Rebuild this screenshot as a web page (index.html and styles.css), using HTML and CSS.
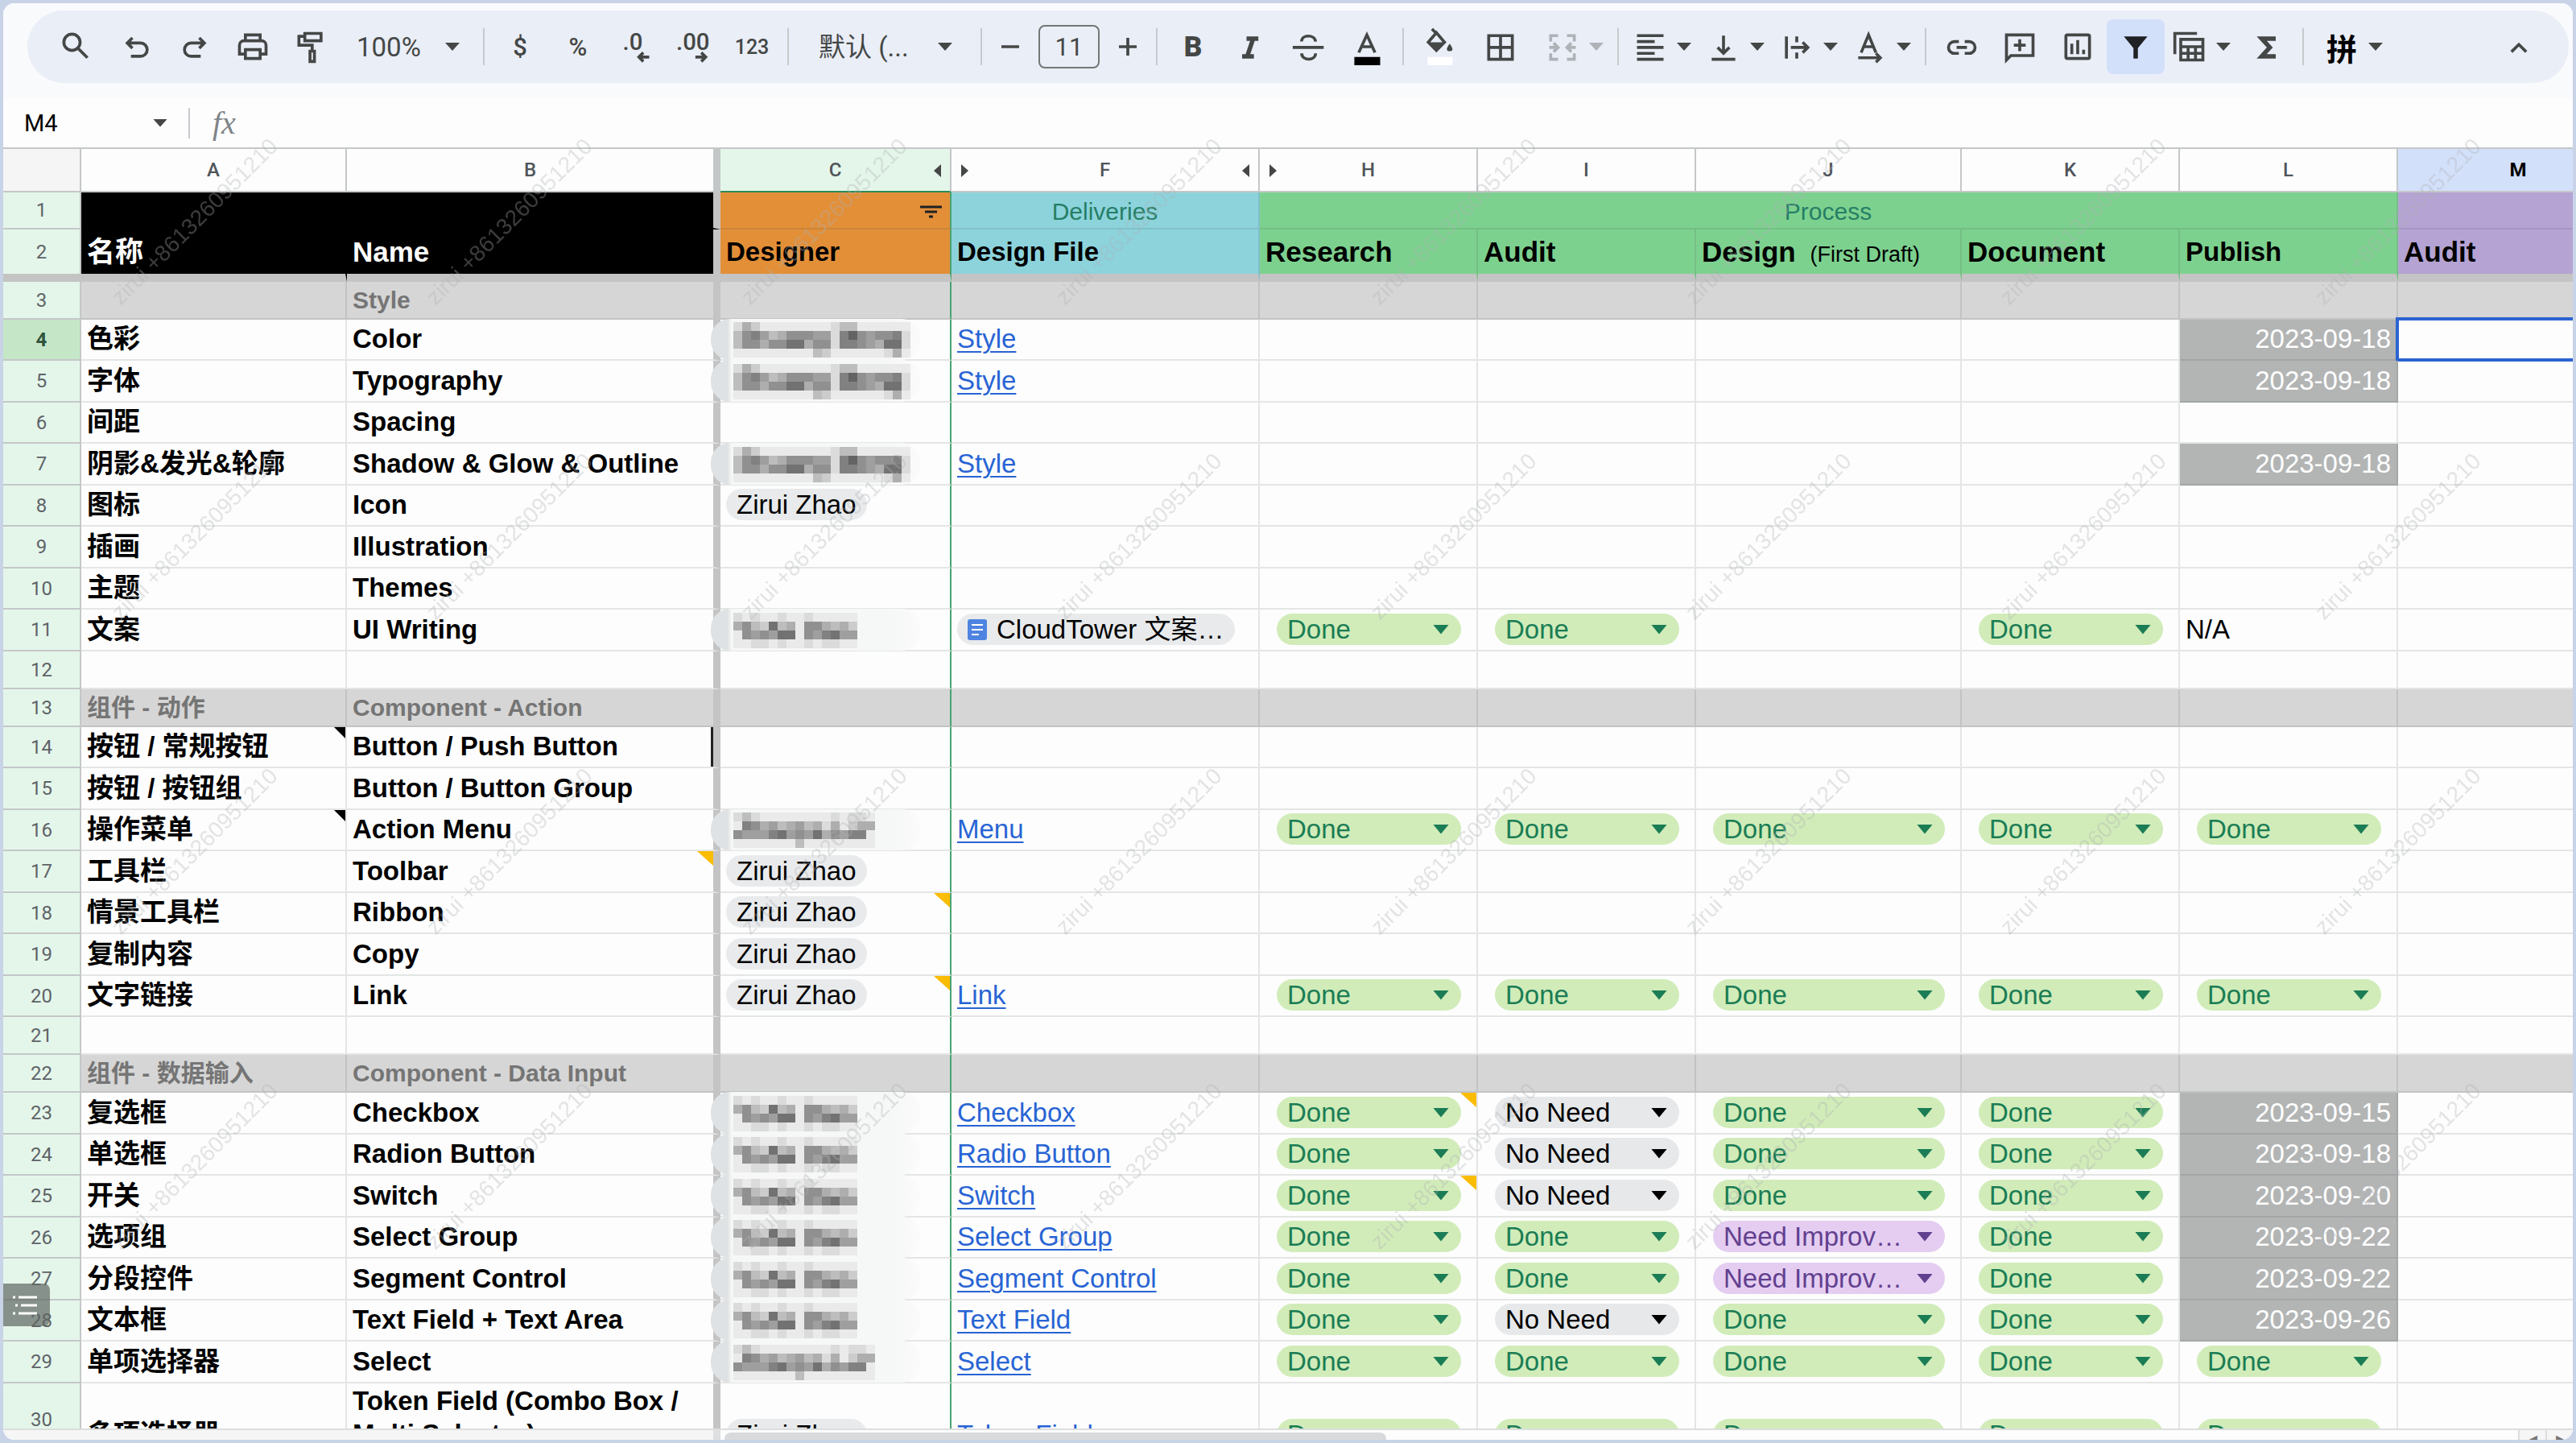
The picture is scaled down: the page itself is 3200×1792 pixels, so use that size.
FILE: index.html
```html
<!DOCTYPE html>
<html lang="zh-CN">
<head>
  <meta charset="UTF-8">
  <meta name="viewport" content="width=device-width, initial-scale=1.0">
  <title>Design System Progress</title>
  <link rel="stylesheet" href="styles.css">
</head>
<body>
  <div class="window">
    <header class="top">
      <div class="toolbar">
        <button class="tool search" aria-label="Search"><svg viewBox="0 0 24 24"><circle cx="9.5" cy="9" r="5.5"/><path d="M13.5 13l6.5 6.5"/></svg></button>
        <button class="tool" aria-label="Undo"><svg viewBox="0 0 24 24"><path d="M9 6L5.500 9.500 9 13M6 9.500h8.500a4.500 4.500 0 0 1 0 9H8"/></svg></button>
        <button class="tool" aria-label="Redo"><svg viewBox="0 0 24 24"><path d="M15 6l3.500 3.500L15 13M18 9.500H9.500a4.500 4.500 0 0 0 0 9H16"/></svg></button>
        <button class="tool" aria-label="Print"><svg viewBox="0 0 24 24"><path d="M7 8V4h10v4M7 17H3v-6a3 3 0 0 1 3-3h12a3 3 0 0 1 3 3v6h-4M7 14h10v6H7z"/></svg></button>
        <button class="tool" aria-label="Paint format"><svg viewBox="0 0 24 24"><path d="M8 3h11v5H8zM8 5H4v6h9v4M11.500 15h3v7h-3z"/></svg></button>
        <span class="pick zoom"><select aria-label="Zoom"><option>100%</option></select></span>
        <span class="sep"></span>
        <button class="tool glyph">$</button>
        <button class="tool glyph">%</button>
        <button class="tool" aria-label="Decrease decimals"><svg viewBox="0 0 24 24"><text x="3" y="14">.0</text><path d="M21 19h-7M17 16l-3 3 3 3"/></svg></button>
        <button class="tool" aria-label="Increase decimals"><svg viewBox="0 0 24 24"><text x="0" y="14">.00</text><path d="M13 19h7M17 16l3 3-3 3"/></svg></button>
        <button class="tool num">123</button>
        <span class="sep"></span>
        <span class="pick family"><select aria-label="Font"><option>默认 (...</option></select></span>
        <span class="sep"></span>
        <button class="tool small" aria-label="Decrease font size"><svg viewBox="0 0 24 24"><path d="M6 12h12"/></svg></button>
        <input class="size" type="text" value="11" aria-label="Font size">
        <button class="tool small" aria-label="Increase font size"><svg viewBox="0 0 24 24"><path d="M6 12h12M12 6v12"/></svg></button>
        <span class="sep"></span>
        <button class="tool bold">B</button>
        <button class="tool" aria-label="Italic"><svg viewBox="0 0 24 24"><path class="thick" d="M9 6.500h8M6 18.500h8M13.500 6.500l-4 12"/></svg></button>
        <button class="tool" aria-label="Strikethrough"><svg viewBox="0 0 24 24"><path d="M1 12.500h21M16.500 8.500c-.5-5-9.500-5-9.500 0M7 16.500c.5 5.500 9.500 5 9.500 0"/></svg></button>
        <button class="tool" aria-label="Text color"><svg viewBox="0 0 24 24"><path d="M6.500 16L12 4l5.500 12M8.500 12h7"/><path class="solid black" d="M3.500 19H21v5.500H3.500z"/></svg></button>
        <span class="sep"></span>
        <button class="tool" aria-label="Fill color"><svg viewBox="0 0 24 24"><path d="M7 0l3 3M10 2.500L4.500 9 10 14.500 15.500 9z"/><path class="solid" d="M5 9h10l-5 5zM19 10c3 4 2 5 0 5s-3-1 0-5"/><path class="solid white" d="M4 19h17v5.500H4z"/></svg></button>
        <button class="tool borders" aria-label="Borders"><svg viewBox="0 0 24 24"><path d="M4 4.500h16v16H4zM12 4.500v16M4 12.500h16"/></svg></button>
        <button class="tool wide merge" aria-label="Merge cells" disabled><svg viewBox="0 0 24 24"><path d="M9 4.500H4v4M15 4.500h5v4M9 20.500H4v-4M15 20.500h5v-4M3 12.500h6M6 9.500l3 3-3 3M21 12.500h-6M18 9.500l-3 3 3 3"/></svg><i></i></button>
        <span class="sep"></span>
        <button class="tool wide" aria-label="Horizontal align"><svg viewBox="0 0 24 24"><path d="M3 4.500h18M3 8.500h12M3 12.500h18M3 16.500h12M3 20.500h18"/></svg><i></i></button>
        <button class="tool wide" aria-label="Vertical align"><svg viewBox="0 0 24 24"><path d="M12 4.500v12M8 12.500l4 4 4-4M4 20.500h16"/></svg><i></i></button>
        <button class="tool wide" aria-label="Text wrapping"><svg viewBox="0 0 24 24"><path d="M5 5v15M12 5v4M12 16v4M8 12.500h12M16 9l3.500 3.500L16 16"/></svg><i></i></button>
        <button class="tool wide" aria-label="Text rotation"><svg viewBox="0 0 24 24"><path d="M6 16l5-12 5 12M8 12h6M4 19.500h15M16 16.500l3 3-3 3"/></svg><i></i></button>
        <span class="sep"></span>
        <button class="tool" aria-label="Insert link"><svg viewBox="0 0 24 24"><path d="M10 8.500H7a4 4 0 0 0 0 8h3M14 8.500h3a4 4 0 0 1 0 8h-3M8.500 12.500h7"/></svg></button>
        <button class="tool" aria-label="Insert comment"><svg viewBox="0 0 24 24"><path d="M3 21V4h18v14H6zM12 7v8M8 11h8"/></svg></button>
        <button class="tool" aria-label="Insert chart"><svg viewBox="0 0 24 24"><rect x="4" y="4" width="16" height="16" rx="1"/><path d="M8 10v7M12 7.500V17M16 14v3"/></svg></button>
        <button class="tool active" aria-label="Filter"><svg viewBox="0 0 24 24"><path class="solid" d="M4 5h16l-6.500 8v7h-3v-7z"/></svg></button>
        <button class="tool wide" aria-label="Filter views"><svg viewBox="0 0 24 24"><path d="M2 17V3h15M6 7h15v14H6zM6 12h15M6 16.500h15M11 12v9M16 12v9"/></svg><i></i></button>
        <button class="tool" aria-label="Functions"><svg viewBox="0 0 24 24"><path class="thick" d="M18 6.500H8.500l5.500 6-5.500 6H18"/></svg></button>
        <span class="sep"></span>
        <button class="tool wide ime" aria-label="Input tools"><b>拼</b><i></i></button>
        <button class="tool collapse" aria-label="Hide menus"><svg viewBox="0 0 24 24"><path d="M7 15.500l5-5 5 5"/></svg></button>
      </div>
    </header>

    <div class="formula-bar">
      <input class="name-box" type="text" value="M4" aria-label="Cell"><i class="caret"></i>
      <span class="sep"></span>
      <span class="fx">fx</span>
    </div>

    <main class="grid">
      <table>
        <colgroup>
          <col class="c-num"><col class="c-a"><col class="c-b"><col class="c-c"><col class="c-f"><col class="c-h"><col class="c-h"><col class="c-j"><col class="c-h"><col class="c-h"><col class="c-m">
        </colgroup>
        <thead>
          <tr class="letters">
            <th class="corner"></th><th>A</th><th class="frozen">B</th>
            <th class="picked">C<i class="left"></i></th>
            <th>F<i class="right"></i><i class="left"></i></th>
            <th>H<i class="right"></i></th><th>I</th><th>J</th><th>K</th><th>L</th><th class="current">M</th>
          </tr>
          <tr class="head1">
            <th class="num">1</th><td class="ink"></td><td class="ink frozen"></td>
            <td class="orange edge"><button class="filter" aria-label="Filter designer"><svg viewBox="0 0 27 16"><path d="M0 2h27M6 8h15M11 14h5"/></svg></button></td>
            <td class="blue">Deliveries</td><td class="green" colspan="5">Process</td><td class="purple"></td>
          </tr>
          <tr class="head2">
            <th class="num">2</th><td class="ink big">名称</td><td class="ink big frozen">Name</td>
            <td class="orange edge">Designer</td><td class="blue">Design File</td>
            <td class="green big">Research</td><td class="green big">Audit</td><td class="green big">Design <small>(First Draft)</small></td>
            <td class="green big">Document</td><td class="green">Publish</td><td class="purple big">Audit</td>
          </tr>
        </thead>
        <tbody id="rows"></tbody>
      </table>
    </main>

    <div class="scrollbar">
      <span class="track-frozen"></span><span class="thumb"></span>
      <button aria-label="Scroll left">◂</button><button aria-label="Scroll right">▸</button>
    </div>

    <button class="outline-tab" aria-label="Show outline"><svg viewBox="0 0 30 26"><path d="M0 3h3M7 3h23M3 13h3M10 13h20M0 23h3M7 23h23"/></svg></button>

    <svg class="watermark">
      <defs>
        <pattern id="mark" width="391" height="391" patternUnits="userSpaceOnUse">
          <text transform="translate(146 376) rotate(-45)">zirui +8613260951210</text>
        </pattern>
      </defs>
      <rect width="100%" height="100%" fill="url(#mark)"/>
    </svg>
  </div>
  <script src="script.js"></script>
</body>
</html>
```

FILE: styles.css
```css
* {
  box-sizing: border-box;
}

body {
  margin: 0;
  height: 100vh;
  background: #c8d3e7;
  font-family: "Liberation Sans", "Noto Sans CJK SC", sans-serif;
  font-size: 33px;
  color: #000;
}

button, select, input {
  font: inherit;
  color: inherit;
  border: none;
  background: none;
  padding: 0;
  margin: 0;
  border-radius: 0;
}

select {
  appearance: none;
  width: 100%;
}

.window {
  position: relative;
  display: flex;
  flex-direction: column;
  height: 100%;
  border: 4px solid #c8d3e7;
  border-radius: 18px;
  overflow: hidden;
  background: #fdfdfd;
}

/* toolbar */
.top {
  background: #f9fafc;
  padding: 9px 5px 19px 30px;
}

.toolbar {
  display: flex;
  align-items: center;
  height: 90px;
  padding-left: 24px;
  border-radius: 45px;
  background: #eaeef7;
  color: #444746;
  font-family: Roboto, "Noto Sans CJK SC", sans-serif;
}

.tool {
  display: flex;
  flex: none;
  align-items: center;
  justify-content: center;
  width: 72px;
  height: 68px;
}

.tool svg {
  flex: none;
  width: 44px;
  height: 44px;
  overflow: visible;
  fill: none;
  stroke: #444746;
  stroke-width: 2;
}

.tool svg text {
  fill: #444746;
  stroke: none;
  font-size: 16px;
  font-weight: 500;
}

.tool svg .thick {
  stroke-width: 3;
}

.tool svg .solid {
  fill: #444746;
  stroke: none;
}

.tool svg .black {
  fill: #000;
}

.tool svg .white {
  fill: #fff;
}

.search {
  margin-right: 4px;
}

.glyph {
  font-size: 31px;
  font-weight: 500;
}

.num {
  font-size: 25px;
  font-weight: 500;
}

.bold {
  font-size: 35px;
  font-weight: 900;
}

.small {
  width: 54px;
}

.wide {
  width: 91px;
  justify-content: flex-start;
  padding-left: 9px;
  gap: 11px;
}

.tool i, .pick::after, .caret {
  flex: none;
  width: 18px;
  height: 10px;
  background: #444746;
  clip-path: polygon(0 0, 100% 0, 50% 100%);
}

.borders {
  width: 80px;
}

.merge {
  margin-left: 6px;
  opacity: .35;
}

.ime {
  margin-left: 8px;
  color: #000;
}

.ime b {
  font-size: 38px;
  width: 44px;
}

.active {
  background: #d3e0fa;
  border-radius: 8px;
}

.active svg .solid {
  fill: #202124;
}

.collapse {
  margin-left: auto;
  margin-right: 26px;
}

.sep {
  flex: none;
  width: 2px;
  height: 46px;
  margin: 0 8px;
  background: #c7c9cd;
}

.pick {
  display: flex;
  flex: none;
  align-items: center;
}

.zoom {
  width: 170px;
  padding: 0 21px;
}

.family {
  width: 222px;
  padding: 0 27px 0 29px;
}

.size {
  width: 76px;
  height: 54px;
  margin: 0 8px;
  border: 2px solid #747775;
  border-radius: 8px;
  text-align: center;
  font-size: 31px;
}

/* formula bar */
.formula-bar {
  display: flex;
  align-items: center;
  height: 61px;
  padding-left: 26px;
}

.name-box {
  width: 160px;
  font-family: Roboto, sans-serif;
  font-size: 29px;
}

.formula-bar .sep {
  height: 38px;
  margin: 0 28px 0 26px;
}

.fx {
  font-family: "Liberation Serif", serif;
  font-style: italic;
  font-size: 40px;
  line-height: 40px;
  color: #808488;
}

/* sheet */
.grid {
  flex: 1;
  min-height: 0;
  overflow: hidden;
  border-top: 2px solid #c4c7c8;
}

table {
  table-layout: fixed;
  width: max-content;
  border-spacing: 0;
  line-height: 38px;
}

.c-num { width: 97px; }
.c-a { width: 330px; }
.c-b { width: 464px; }
.c-c { width: 287px; }
.c-f { width: 383px; }
.c-h { width: 271px; }
.c-j { width: 330px; }
.c-m { width: 300px; }

th, td {
  position: relative;
  padding: 0 7px 6px;
  border: solid rgba(60, 70, 70, .13);
  border-width: 0 2px 2px 0;
  white-space: nowrap;
  text-align: left;
  vertical-align: bottom;
}

.frozen {
  border-right: 9px solid #c4c4c4;
}

.edge {
  border-right-color: #4aa374;
}

.letters th {
  height: 54px;
  padding: 0;
  border-color: #c4c7c8;
  font: 500 24px Roboto, sans-serif;
  color: #50555a;
  text-align: center;
  vertical-align: middle;
}

.letters .corner {
  background: #f5f5f5;
}

.letters .picked {
  background: #e4f6ea;
  border-bottom-color: #2f8a59;
}

.letters .current {
  background: #d3e0fa;
  color: #000;
  font-weight: 700;
}

/* arrows of hidden columns */
.letters i {
  position: absolute;
  top: 19px;
  width: 9px;
  height: 16px;
  background: #444746;
}

.letters .left {
  right: 11px;
  clip-path: polygon(100% 0, 100% 100%, 0 50%);
}

.letters .right {
  left: 12px;
  clip-path: polygon(0 0, 100% 50%, 0 100%);
}

th.num {
  padding: 0;
  border-color: #c4c7c8;
  background: #e4f6ea;
  font: 400 24px Roboto, sans-serif;
  color: #5f6368;
  text-align: center;
  vertical-align: middle;
}

.head1 td {
  height: 46px;
  padding-bottom: 1px;
  font-size: 30px;
  color: #267f66;
  text-align: center;
}

.head2 th, .head2 td {
  height: 65px;
  border-bottom: 10px solid #c4c4c4;
  font-weight: bold;
}

.head2 td {
  padding-bottom: 8px;
}

.head2 th.num {
  font-weight: 400;
}

.head2 .big {
  font-size: 35px;
}

.head2 small {
  margin-left: 8px;
  font-size: 27px;
  font-weight: 400;
  line-height: 27px;
}

.ink {
  background: #000;
  color: #fff;
  border-color: #000;
}

.ink.frozen {
  border-right-color: #c4c4c4;
}

.orange { background: #e28f38; }
.blue { background: #8cd3dc; }
.green { background: #7dd18f; }
.purple { background: #b4a3d3; }

.filter {
  position: absolute;
  right: 10px;
  top: 16px;
  width: 27px;
  height: 16px;
}

.filter svg {
  display: block;
  stroke: #202124;
  stroke-width: 3;
}

tbody tr:nth-child(odd) { height: 52px; }
tbody tr:nth-child(even) { height: 51px; }
tbody tr.empty { height: 47px; }
tbody tr.section { height: 47px; }
tbody tr.tall { height: 91px; }

.section td {
  padding-bottom: 3px;
  background: #d6d6d6;
  font-size: 30px;
  font-weight: bold;
  color: #757575;
}

.title {
  font-weight: bold;
}

.tall .title {
  white-space: normal;
  line-height: 41px;
}

.selected-row th.num {
  background: #c5e7c8;
  font-weight: 700;
  color: #30543c;
}

.selected::after {
  content: "";
  position: absolute;
  inset: -3px 0 -3px -3px;
  border: 4px solid #2b63d1;
}

.cursor {
  border-right: 9px solid #c4c4c4;
  box-shadow: inset -3px 0 #202124;
}

td.date {
  background: #b3b5b5;
  color: #fff;
  text-align: right;
}

td a {
  color: #2864d4;
  text-decoration-thickness: 2px;
  text-underline-offset: 4px;
}

td.designer {
  border-right: 2px solid #4aa374;
}

/* chips */
.chip {
  display: flex;
  align-items: center;
  height: 39px;
  margin: 0 12px 0 14px;
  padding: 0 15px 0 13px;
  border-radius: 20px;
}

.chip select {
  line-height: 38px;
}

.chip::after, .pick::after {
  content: "";
}

.chip::after {
  flex: none;
  width: 20px;
  height: 12px;
  background: currentColor;
  clip-path: polygon(0 0, 100% 0, 50% 100%);
}

.done { background: #d1ecb9; color: #1b7d55; }
.no-need { background: #e6e8ea; color: #000; }
.improve { background: #e4cdf1; color: #62408f; }

.person, .doc {
  display: inline-flex;
  align-items: center;
  height: 39px;
  padding: 0 13px;
  border-radius: 20px;
  background: #e8eaec;
  vertical-align: bottom;
}

.doc {
  gap: 12px;
  padding-right: 14px;
  color: #000;
  text-decoration: none;
}

.doc svg {
  width: 24px;
  height: 26px;
}

/* corner notes */
.note::before {
  content: "";
  position: absolute;
  top: 0;
  right: 0;
  width: 20px;
  height: 18px;
  background: #fbbc04;
  clip-path: polygon(0 0, 100% 0, 100% 100%);
}

.note.dark::before {
  width: 14px;
  height: 14px;
  background: #000;
}

/* hidden names */
.masked::before {
  content: "";
  position: absolute;
  inset: -1px 36px -1px -12px;
  border-radius: 24px;
  background: linear-gradient(90deg, #dfe2e4 8%, #f6f7f7 10%, #f6f7f7 85%, #fbfbfb);
}

.masked svg {
  position: relative;
  display: block;
  height: 44px;
  margin-left: 9px;
  margin-bottom: -4px;
}

/* bottom */
.scrollbar {
  display: flex;
  align-items: flex-end;
  height: 14px;
  border-top: 2px solid #dcdddd;
  background: #fdfdfd;
}

.track-frozen {
  width: 891px;
  height: 12px;
  background: #f6f6f6;
  border-right: 9px solid #dedfe0;
}

.thumb {
  width: 822px;
  height: 9px;
  margin: 0 auto 0 5px;
  border-radius: 8px 8px 0 0;
  background: #d9dadc;
}

.scrollbar button {
  width: 34px;
  height: 12px;
  border-left: 2px solid #dcdddd;
  background: #f6f6f6;
  color: #777;
  font-size: 22px;
  line-height: 22px;
  overflow: hidden;
}

.outline-tab {
  position: absolute;
  left: 0;
  bottom: 141px;
  width: 58px;
  height: 53px;
  padding-left: 12px;
  border-radius: 0 8px 8px 0;
  background: rgba(95, 102, 98, .7);
}

.outline-tab svg {
  display: block;
  width: 30px;
  height: 26px;
  stroke: #fff;
  stroke-width: 3;
}

.watermark {
  position: absolute;
  left: 0;
  top: 0;
  width: 100%;
  height: 1564px;
  pointer-events: none;
}

.watermark text {
  font-size: 28px;
  fill: rgba(174, 177, 180, .34);
}
```

FILE: script.js
```js
// darkness per block of the blurred names, 0 = lightest
const masks = {
  meng: ["14200000000133000000", "36753466655179656671", "36646688466177654881", "00000000032000000140"],
  han: ["10100100100000", "46328340664342", "06565880657855", "00110100101100"],
  lei: ["1310000000010110", "0764534534140244", "6555785658465770", "0000000300000000"]
};

// num, chinese name, name, designer, file, H, I, J, K, L
const D = "Done", N = "No Need", I = "Need Improv…";
const rows = [
  [3, "", "Style"],
  [4, "色彩", "Color", "meng", "Style", "", "", "", "", "2023-09-18"],
  [5, "字体", "Typography", "meng", "Style", "", "", "", "", "2023-09-18"],
  [6, "间距", "Spacing"],
  [7, "阴影&发光&轮廓", "Shadow & Glow & Outline", "meng", "Style", "", "", "", "", "2023-09-18"],
  [8, "图标", "Icon", "Zirui Zhao"],
  [9, "插画", "Illustration"],
  [10, "主题", "Themes"],
  [11, "文案", "UI Writing", "han", "doc:CloudTower 文案…", D, D, "", D, "N/A"],
  [12, "", ""],
  [13, "组件 - 动作", "Component - Action"],
  [14, "按钮 / 常规按钮", "Button / Push Button"],
  [15, "按钮 / 按钮组", "Button / Button Group"],
  [16, "操作菜单", "Action Menu", "lei", "Menu", D, D, D, D, D],
  [17, "工具栏", "Toolbar", "Zirui Zhao"],
  [18, "情景工具栏", "Ribbon", "Zirui Zhao"],
  [19, "复制内容", "Copy", "Zirui Zhao"],
  [20, "文字链接", "Link", "Zirui Zhao", "Link", D, D, D, D, D],
  [21, "", ""],
  [22, "组件 - 数据输入", "Component - Data Input"],
  [23, "复选框", "Checkbox", "han", "Checkbox", D, N, D, D, "2023-09-15"],
  [24, "单选框", "Radion Button", "han", "Radio Button", D, N, D, D, "2023-09-18"],
  [25, "开关", "Switch", "han", "Switch", D, N, D, D, "2023-09-20"],
  [26, "选项组", "Select Group", "han", "Select Group", D, D, I, D, "2023-09-22"],
  [27, "分段控件", "Segment Control", "han", "Segment Control", D, D, I, D, "2023-09-22"],
  [28, "文本框", "Text Field + Text Area", "han", "Text Field", D, N, D, D, "2023-09-26"],
  [29, "单项选择器", "Select", "lei", "Select", D, D, D, D, D],
  [30, "多项选择器", "Token Field (Combo Box / Multi Selector)", "Zirui Zhao", "Token Field", D, D, D, D, D]
];

// row-column: kind of corner note
const notes = { "14-1": "dark", "16-1": "dark", "17-2": "", "18-3": "", "20-3": "", "23-5": "", "25-5": "" };
const sections = [3, 13, 22];
const chipClass = { [D]: "done", [N]: "no-need", [I]: "improve" };

function mask(name) {
  const lines = masks[name];
  let rects = "";
  lines.forEach((line, y) => {
    [...line].forEach((d, x) => {
      const g = 234 - d * 15;
      rects += `<rect x="${x * 11}" y="${y * 11}" width="11" height="11" fill="rgb(${g},${g},${g})"/>`;
    });
  });
  return `<svg width="${lines[0].length * 11}" height="44" shape-rendering="crispEdges">${rects}</svg>`;
}

function content(value, col) {
  if (!value) return "";
  if (col === 3) return masks[value] ? mask(value) : `<span class="person">${value}</span>`;
  if (col === 4 && value.startsWith("doc:")) {
    return `<a class="doc" href="#"><svg viewBox="0 0 24 26"><rect width="24" height="26" rx="3" fill="#4f83e1"/><path d="M5 7h14M5 13h14M5 19h9" stroke="#fff" stroke-width="2"/></svg>${value.slice(4)}</a>`;
  }
  if (col === 4) return `<a href="#">${value}</a>`;
  if (chipClass[value]) {
    return `<span class="chip ${chipClass[value]}"><select aria-label="Status"><option>${value}</option></select></span>`;
  }
  return value.replace(/&/g, "&amp;");
}

document.getElementById("rows").innerHTML = rows.map(row => {
  const num = row[0];
  const type = sections.includes(num) ? "section" : !row[2] ? "empty" : num === 30 ? "tall" : num === 4 ? "selected-row" : "";
  let cells = `<th class="num">${num}</th>`;
  for (let col = 1; col <= 10; col++) {
    const value = row[col] || "";
    const cls = [];
    if (col <= 2) cls.push("title");
    if (col === 2) cls.push("frozen");
    if (num === 14 && col === 2) cls.push("cursor");
    if (col === 3) cls.push("designer");
    if (col === 3 && masks[value]) cls.push("masked");
    if (/^\d{4}-/.test(value)) cls.push("date");
    if (num === 4 && col === 10) cls.push("selected");
    const note = notes[`${num}-${col}`];
    if (note !== undefined) cls.push("note", note);
    cells += `<td class="${cls.join(" ").trim()}">${content(value, col)}</td>`;
  }
  return `<tr class="${type}">${cells}</tr>`;
}).join("");
```
